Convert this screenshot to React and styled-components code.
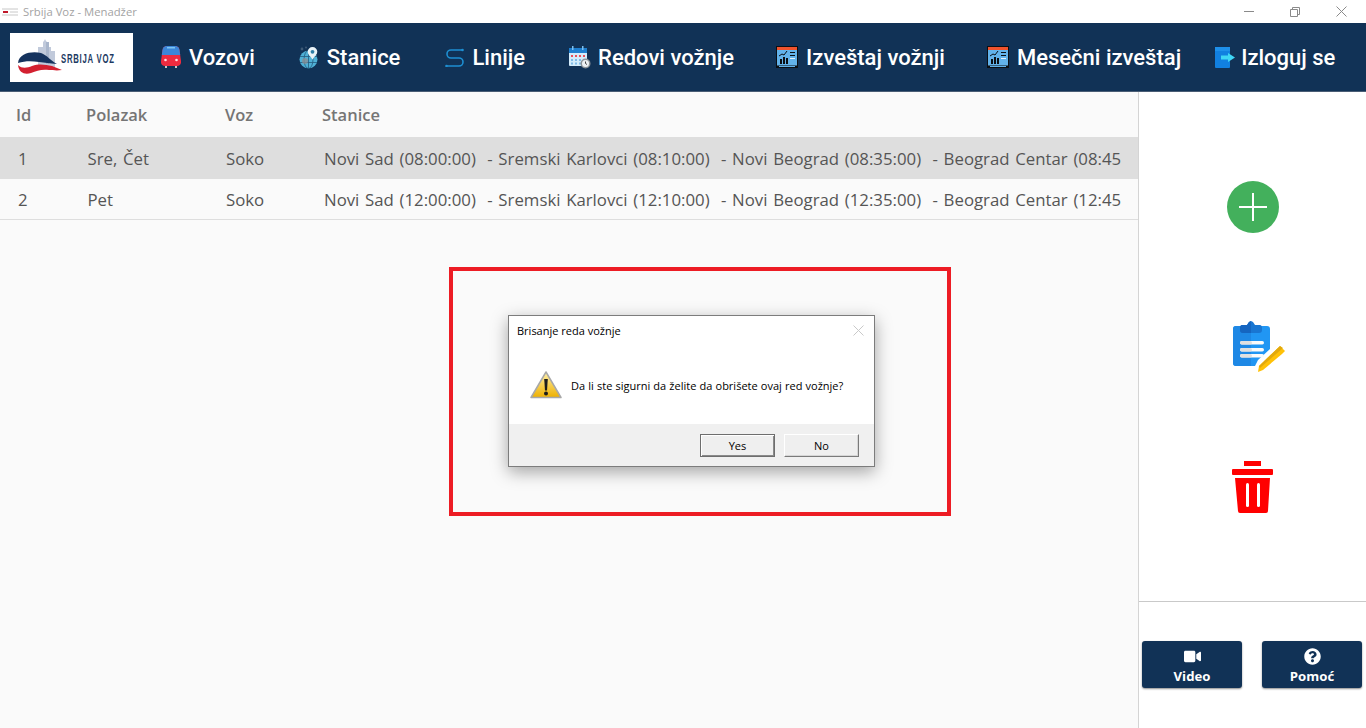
import React from "react";
import styled, { createGlobalStyle } from "styled-components";
import { FaVideo, FaQuestionCircle } from "react-icons/fa";

const GlobalStyle = createGlobalStyle`
  html, body { margin:0; padding:0; background:#fff; }
  * { box-sizing:border-box; }
`;

const Page = styled.div`
  position:relative;
  width:1366px;
  height:728px;
  overflow:hidden;
  display:flex;
  flex-direction:column;
  font-family:"Open Sans", sans-serif;
`;

const TitleBar = styled.div`
  height:23px;
  flex:none;
  display:flex;
  align-items:center;
  background:#fff;
  padding-left:2px;
`;
const TitleText = styled.span`
  font-size:11.3px;
  color:#a3a3a3;
  margin-left:5px;
`;
const WindowButtons = styled.div`
  margin-left:auto;
  display:flex;
  align-items:center;
  height:100%;
  padding-right:2px;
`;
const WindowButton = styled.div`
  width:46px;
  height:21px;
  display:flex;
  align-items:center;
  justify-content:center;
`;

const Nav = styled.nav`
  height:69px;
  flex:none;
  display:flex;
  align-items:center;
  background:#113256;
  border-bottom:1px solid #4a5d75;
  padding-left:10px;
`;
const LogoBox = styled.div`
  width:123px;
  height:49px;
  margin-right:28px;
  background:#fff;
  display:flex;
  align-items:center;
  padding-left:8px;
  svg { flex:none; }
`;
const LogoText = styled.span`
  font-family:"Liberation Sans", sans-serif;
  font-weight:700;
  font-size:12.5px;
  letter-spacing:1.2px;
  color:#1c3a62;
  margin-left:-9px;
  margin-top:4px;
  white-space:nowrap;
  transform:scaleX(.62);
  transform-origin:left center;
`;
const NavItem = styled.a`
  display:flex;
  align-items:center;
  gap:${p => p.$gap || 8}px;
  margin-right:${p => p.$after || 43}px;
  font-family:Roboto, sans-serif;
  font-weight:500;
  font-size:22px;
  color:#fff;
  white-space:nowrap;
`;

const Main = styled.div`
  flex:1;
  display:flex;
  min-height:0;
`;
const TablePane = styled.div`
  width:1138px;
  flex:none;
  background:#fafafa;
`;
const Row = styled.div`
  display:grid;
  grid-template-columns:${p => p.$head ? "70px 139px 97px 1fr" : "69.5px 138.5px 98px 1fr"};
  align-items:center;
  height:${p => p.$h}px;
  padding-left:${p => p.$head ? 16 : 18}px;
  padding-right:17px;
  background:${p => p.$selected ? "#dedede" : "transparent"};
  border-bottom:${p => p.$line ? "1px solid #dedede" : "none"};
`;
const HeadCell = styled.div`
  font-size:16.5px;
  font-weight:600;
  color:#757575;
`;
const Cell = styled.div`
  font-size:16.8px;
  word-spacing:1.35px;
  color:#555;
  white-space:pre;
  overflow:hidden;
`;

const SidePane = styled.aside`
  flex:1;
  display:flex;
  flex-direction:column;
  background:#fff;
  border-left:1px solid #d4d4d4;
`;
const ActionList = styled.div`
  flex:1;
  display:flex;
  flex-direction:column;
  align-items:center;
  justify-content:center;
  gap:88px;
  padding-top:2px;
`;
const FooterActions = styled.div`
  flex:none;
  height:127px;
  border-top:1px solid #c9c9c9;
  display:flex;
  gap:20px;
  padding:39px 4px 0 3px;
`;
const FooterButton = styled.button`
  width:100px;
  height:47px;
  border:none;
  border-radius:3px;
  background:#113256;
  color:#fff;
  box-shadow:0 1px 2px rgba(0,0,0,.45);
  display:flex;
  flex-direction:column;
  align-items:center;
  padding:7px 0 0;
  font-family:"Open Sans", sans-serif;
  font-weight:700;
  font-size:13.2px;
  line-height:19px;
  svg { font-size:17px; margin-bottom:2px; }
`;

const RedFrame = styled.div`
  position:absolute;
  left:449px;
  top:267px;
  width:502px;
  height:249px;
  border:4px solid #ed1c24;
`;

const Dialog = styled.div`
  position:absolute;
  left:508px;
  top:315px;
  width:367px;
  height:152px;
  background:#fff;
  border:1px solid #7c7c7c;
  box-shadow:0 5px 16px rgba(0,0,0,.35);
  display:flex;
  flex-direction:column;
  font-size:11px;
  color:#000;
`;
const DialogHeader = styled.div`
  height:30px;
  flex:none;
  display:flex;
  align-items:center;
  justify-content:space-between;
  padding:0 10px 2px 8px;
`;
const DialogBody = styled.div`
  flex:1;
  display:flex;
  align-items:center;
  gap:9px;
  padding-left:21px;
  word-spacing:.3px;
`;
const DialogFooter = styled.div`
  height:42px;
  flex:none;
  background:#f0f0f0;
  display:flex;
  justify-content:flex-end;
  gap:9px;
  padding:10px 15px 0 0;
`;
const DialogButton = styled.button`
  width:75px;
  height:23px;
  background:#efefef;
  border:1px solid;
  border-color:${p => p.$primary ? "#6e6e6e" : "#fff #7a7a7a #7a7a7a #fff"};
  box-shadow:${p => p.$primary
    ? "inset 1px 1px 0 #fff, inset -1px -1px 0 #8a8a8a"
    : "inset -1px -1px 0 #d6d6d6"};
  border-radius:0;
  padding:0;
  font-family:"Open Sans", sans-serif;
  font-size:11px;
  color:#000;
`;

const TrainIcon = () => (
  <svg width="20" height="22" viewBox="0 0 20 22">
    <rect x="4" y="19" width="2" height="3" fill="#c9c9c9" />
    <rect x="14" y="19" width="2" height="3" fill="#c9c9c9" />
    <path d="M6 0h8c3 0 4 2 4.500 4L20 15c.3 3-1 5-4 5H4c-3 0-4.300-2-4-5L1.500 4C2 2 3 0 6 0z" fill="#ee2b3f" />
    <path d="M6 0h8c3 0 4 2 4.500 4l.7 5H.8l.7-5C2 2 3 0 6 0z" fill="#3b86d8" />
    <rect x="6" y="1" width="8" height="1.500" fill="#7cc4f2" />
    <circle cx="4.500" cy="14" r="1.300" fill="#ffe3e6" />
    <circle cx="15.500" cy="14" r="1.300" fill="#ffe3e6" />
  </svg>
);

const GlobeIcon = () => (
  <svg width="20" height="23" viewBox="0 0 20 23">
    <circle cx="9.500" cy="13.500" r="9" fill="#4fb0d6" />
    <g fill="none" stroke="#143a5c" strokeWidth=".8" opacity=".7">
      <ellipse cx="9.500" cy="13.500" rx="4.500" ry="9" />
      <path d="M1 10.500h17M1 16.500h17M9.500 5v17" />
    </g>
    <circle cx="6" cy="15" r="3" fill="#8b8f94" opacity=".75" />
    <path d="M13.500 1a4.800 4.800 0 0 1 4.800 4.800c0 2.700-2.800 4.700-4.800 7.700-2-3-4.800-5-4.800-7.700A4.800 4.800 0 0 1 13.500 1z" fill="#e9f3f8" />
    <circle cx="13.500" cy="5.800" r="1.900" fill="#2f7fa8" />
    <circle cx="3" cy="3" r="1.400" fill="#3e5a76" />
    <circle cx="7" cy="1.500" r="1" fill="#3e5a76" />
  </svg>
);

const LineIcon = () => (
  <svg width="19" height="19" viewBox="0 0 19 19">
    <path d="M18 2H6a4 4 0 0 0 0 8h8a4 4 0 0 1 0 8H1" fill="none" stroke="#1e8fd2" strokeWidth="1.600" />
    <circle cx="17.500" cy="2" r="1.300" fill="#1e8fd2" />
    <circle cx="1.500" cy="18" r="1.300" fill="#1e8fd2" />
  </svg>
);

const CalendarIcon = () => (
  <svg width="22" height="23" viewBox="0 0 22 23">
    <rect x="0" y="2" width="18" height="18" rx="1" fill="#d4ecfb" />
    <rect x="0" y="2" width="18" height="5" fill="#1f7fcf" />
    <rect x="3" y="0" width="1.500" height="4" fill="#7cc0ef" />
    <rect x="13" y="0" width="1.500" height="4" fill="#7cc0ef" />
    {[2, 6, 10, 14].map(x => <rect key={x} x={x} y="9" width="2" height="2" fill="#e9505a" />)}
    {[2, 6, 10, 14].map(x => <rect key={x} x={x} y="13" width="2" height="2" fill="#7fbbe8" />)}
    {[2, 6, 10].map(x => <rect key={x} x={x} y="16.500" width="2" height="2" fill="#7fbbe8" />)}
    <circle cx="16.500" cy="17.500" r="5" fill="#8d9499" />
    <circle cx="16.500" cy="17.500" r="3.500" fill="#eef1f3" />
    <path d="M16.500 15.500v2l1.500 1" stroke="#444" fill="none" />
  </svg>
);

const ReportIcon = () => (
  <svg width="22" height="22" viewBox="0 0 22 22">
    <rect x="0" y="0" width="22" height="22" fill="#0b0f14" />
    <rect x="1" y="1" width="20" height="3" fill="#f0532d" />
    <rect x="1" y="4" width="20" height="15.500" fill="#62b2ea" />
    <path d="M3 10l3-2 2 1 3-4" stroke="#0b0f14" fill="none" />
    <rect x="4" y="13" width="2" height="5" fill="#0b0f14" />
    <rect x="7" y="11" width="2" height="7" fill="#0b0f14" />
    <rect x="10" y="12" width="2" height="6" fill="#0b0f14" />
    <rect x="14" y="6" width="5" height="1" fill="#0b0f14" />
    <rect x="14" y="9" width="5" height="1" fill="#0b0f14" />
    <rect x="14" y="12" width="5" height="1" fill="#e4f2fc" />
    <rect x="3" y="20" width="16" height="1" fill="#62b2ea" />
  </svg>
);

const LogoutIcon = () => (
  <svg width="21" height="21" viewBox="0 0 21 21">
    <rect x="0" y="0" width="15" height="21" rx="1" fill="#1180e0" />
    <rect x="0" y="0" width="15" height="4" fill="#1e90ea" />
    <path d="M6 8.500h7V6l7 4.500-7 4.500v-2.500H6z" fill="#3fd6f5" />
  </svg>
);

const Logo = () => (
  <svg width="52" height="36" viewBox="0 0 52 36">
    <path d="M20 8h5V3l1-1 1-2 1 2 1 1v5h4v4h4v16H20z" fill="#c1cadb" />
    <rect x="28" y="3" width="3" height="22" fill="#a9b6cc" />
    <path d="M0 24C1 14 14 12 23 14c6 2 10 8 16 11-8-1-12-1-18-2-8-1-14-1-21 1z" fill="#15335e" />
    <path d="M0 26c4 4 9 3 14 1 8-3 14-1 20 0l10 4c-6 1-9 0-13 0-8-1-12 1-18 3-6 2-12 0-13-8z" fill="#d32030" />
  </svg>
);

const AddIcon = () => (
  <svg width="52" height="52" viewBox="0 0 52 52">
    <circle cx="26" cy="26" r="26" fill="#43b05c" />
    <path d="M26 12v28M12 26h28" stroke="#fff" strokeWidth="2" />
  </svg>
);

const EditIcon = () => (
  <svg width="66" height="52" viewBox="0 0 66 52">
    <path d="M16 5h31a3 3 0 0 1 3 3v20l-12 11-3 6H16a3 3 0 0 1-3-3V8a3 3 0 0 1 3-3z" fill="#2196f3" />
    <path d="M16 5h15v40H16a3 3 0 0 1-3-3V8a3 3 0 0 1 3-3z" fill="#1e88e5" />
    <path d="M22 4h5l2-3 2-1 2 1 2 3h5c1 0 2 1 2 3v2c0 2-1 3-3 3H23c-2 0-3-1-3-3V7c0-2 1-3 2-3z" fill="#1976d2" />
    <path d="M31 0l-2 1-2 3h-5c-1 0-2 1-2 3v2c0 2 1 3 3 3h8z" fill="#1565c0" />
    {[20, 27, 33].map(y => <rect key={y} x="20" y={y} width="24" height="3.500" rx="1.700" fill="#fafafa" />)}
    {[20, 27, 33].map(y => <rect key={y} x="20" y={y} width="12" height="3.500" rx="1.700" fill="#e0e0e0" />)}
    <path d="M60 25l5 5-3 3-19 16-5 2 1-6z" fill="#ffc107" />
    <path d="M60 25l3 2-23 20-1-2z" fill="#e2a90d" />
  </svg>
);

const TrashIcon = () => (
  <svg width="42" height="53" viewBox="0 0 42 53">
    <rect x="12" y="0" width="17" height="5" fill="#f00" />
    <path d="M1 8h39a1 1 0 0 1 1 1v4a1 1 0 0 1-1 1H1a1 1 0 0 1-1-1V9a1 1 0 0 1 1-1z" fill="#f00" />
    <path d="M3 17h35l-2 33a2 2 0 0 1-2 2H8a2 2 0 0 1-2-2z" fill="#f00" />
    <rect x="14" y="22" width="3" height="24" rx="1.500" fill="#fff" />
    <rect x="25" y="22" width="3" height="24" rx="1.500" fill="#fff" />
  </svg>
);

const WarningIcon = () => (
  <svg width="32" height="28" viewBox="0 0 32 28">
    <defs>
      <linearGradient id="warn" x1="0" y1="0" x2="0" y2="1">
        <stop offset="0" stopColor="#fff0a8" />
        <stop offset="1" stopColor="#eeb000" />
      </linearGradient>
    </defs>
    <path d="M16 1L31 26.500H1z" fill="url(#warn)" stroke="#a8a8a8" strokeWidth="1.500" strokeLinejoin="round" />
    <path d="M14.200 8h3.600l-.8 11.500h-2z" fill="#1c1c1c" />
    <circle cx="16" cy="22.500" r="2" fill="#1c1c1c" />
  </svg>
);

const navItems = [
  { label: "Vozovi", icon: <TrainIcon />, after: 44 },
  { label: "Stanice", icon: <GlobeIcon />, after: 45 },
  { label: "Linije", icon: <LineIcon />, after: 44 },
  { label: "Redovi vožnje", icon: <CalendarIcon />, gap: 7, after: 42 },
  { label: "Izveštaj vožnji", icon: <ReportIcon />, after: 42 },
  { label: "Mesečni izveštaj", icon: <ReportIcon />, after: 34 },
  { label: "Izloguj se", icon: <LogoutIcon />, gap: 5 },
];

const rows = [
  { id: 1, days: "Sre, Čet", train: "Soko", h: "08", selected: true },
  { id: 2, days: "Pet", train: "Soko", h: "12" },
];

const stops = h =>
  `Novi Sad (${h}:00:00)  - Sremski Karlovci (${h}:10:00)  - Novi Beograd (${h}:35:00)  - Beograd Centar (${h}:45`;

export default function App() {
  return (
    <Page>
      <GlobalStyle />
      <TitleBar>
        <svg width="16" height="8" viewBox="0 0 16 8">
          <path d="M0 1h16M8 4h8M0 7h16" stroke="#c8c8c8" />
          <path d="M1 4h5" stroke="#c0182a" strokeWidth="2" />
        </svg>
        <TitleText>Srbija Voz - Menadžer</TitleText>
        <WindowButtons>
          <WindowButton>
            <svg width="10" height="1"><rect width="10" height="1" fill="#8a8a8a" /></svg>
          </WindowButton>
          <WindowButton>
            <svg width="10" height="10" fill="none" stroke="#8a8a8a">
              <path d="M2.500 2.500V.5h7v7h-2M.5 2.500h7v7h-7z" />
            </svg>
          </WindowButton>
          <WindowButton>
            <svg width="11" height="11" stroke="#8a8a8a"><path d="M.5.5l10 10M10.500.5l-10 10" /></svg>
          </WindowButton>
        </WindowButtons>
      </TitleBar>

      <Nav>
        <LogoBox>
          <Logo />
          <LogoText>SRBIJA VOZ</LogoText>
        </LogoBox>
        {navItems.map(item => (
          <NavItem key={item.label} $gap={item.gap} $after={item.after}>
            {item.icon}
            {item.label}
          </NavItem>
        ))}
      </Nav>

      <Main>
        <TablePane>
          <Row $head $h={45}>
            <HeadCell>Id</HeadCell>
            <HeadCell>Polazak</HeadCell>
            <HeadCell>Voz</HeadCell>
            <HeadCell>Stanice</HeadCell>
          </Row>
          {rows.map(r => (
            <Row key={r.id} $h={r.selected ? 42 : 41} $selected={r.selected} $line={!r.selected}>
              <Cell>{r.id}</Cell>
              <Cell>{r.days}</Cell>
              <Cell>{r.train}</Cell>
              <Cell>{stops(r.h)}</Cell>
            </Row>
          ))}
        </TablePane>
        <SidePane>
          <ActionList>
            <AddIcon />
            <EditIcon />
            <TrashIcon />
          </ActionList>
          <FooterActions>
            <FooterButton>
              <FaVideo />
              Video
            </FooterButton>
            <FooterButton>
              <FaQuestionCircle />
              Pomoć
            </FooterButton>
          </FooterActions>
        </SidePane>
      </Main>

      <RedFrame />
      <Dialog>
        <DialogHeader>
          Brisanje reda vožnje
          <svg width="11" height="11" stroke="#c9c9c9"><path d="M.5.5l10 10M10.500.5l-10 10" /></svg>
        </DialogHeader>
        <DialogBody>
          <WarningIcon />
          Da li ste sigurni da želite da obrišete ovaj red vožnje?
        </DialogBody>
        <DialogFooter>
          <DialogButton $primary>Yes</DialogButton>
          <DialogButton>No</DialogButton>
        </DialogFooter>
      </Dialog>
    </Page>
  );
}
